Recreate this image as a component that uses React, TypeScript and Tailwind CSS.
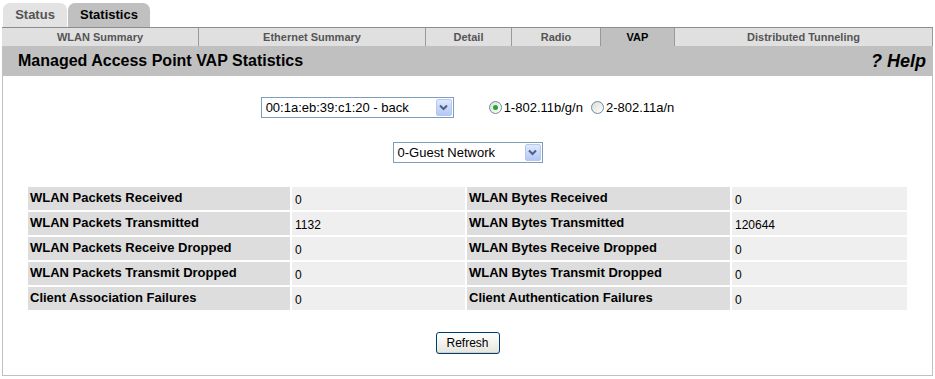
const subTabs = [
  { label: "WLAN Summary", w: "w-[197px]" },
  { label: "Ethernet Summary", w: "w-[227px]" },
  { label: "Detail", w: "w-[86px]" },
  { label: "Radio", w: "w-[89px]" },
  { label: "VAP", w: "w-[74px]", active: true },
  { label: "Distributed Tunneling", w: "flex-1" },
];

const stats = [
  ["WLAN Packets Received", "0", "WLAN Bytes Received", "0"],
  ["WLAN Packets Transmitted", "1132", "WLAN Bytes Transmitted", "120644"],
  ["WLAN Packets Receive Dropped", "0", "WLAN Bytes Receive Dropped", "0"],
  ["WLAN Packets Transmit Dropped", "0", "WLAN Bytes Transmit Dropped", "0"],
  ["Client Association Failures", "0", "Client Authentication Failures", "0"],
];

const DropButton = () => (
  <div className="w-[16px] h-[17px] mr-[1px] rounded-[2px] border border-[#b6c8f0] bg-gradient-to-b from-[#dfe8fd] to-[#b4c8f6] flex items-center justify-center">
    <svg width="9" height="7" viewBox="0 0 9 7">
      <path d="M1 1.5 L4.5 5 L8 1.5" fill="none" stroke="#4d6185" strokeWidth="2" />
    </svg>
  </div>
);

const FakeSelect = ({ value, width }: { value: string; width: string }) => (
  <div className={`${width} h-[21px] border border-[#7f9db9] bg-white flex items-center justify-between`}>
    <span className="pl-[4px] text-[13px] text-black leading-none">{value}</span>
    <DropButton />
  </div>
);

const Radio = ({ checked, label }: { checked?: boolean; label: string }) => (
  <label className="flex items-center gap-[2px] text-[13px] text-black">
    <span className="w-[13px] h-[13px] rounded-full border border-[#6e8aa6] bg-gradient-to-br from-[#dcdcd6] to-white flex items-center justify-center">
      {checked && <span className="w-[5px] h-[5px] rounded-full bg-[#28a428]" />}
    </span>
    {label}
  </label>
);

export default function App() {
  return (
    <div className="w-[935px] h-[379px] bg-white font-['Liberation_Sans',Arial,sans-serif] overflow-hidden">
      {/* main tabs */}
      <div className="h-[27px] flex items-end pl-[3px] gap-[1px]">
        <div className="w-[64px] h-[24px] rounded-t-[7px] bg-[#e3e3e3] flex items-center justify-center text-[13px] font-bold text-[#555]">
          Status
        </div>
        <div className="w-[82px] h-[24px] rounded-t-[7px] bg-[#c0c0c0] flex items-center justify-center text-[13px] font-bold text-black">
          Statistics
        </div>
      </div>

      {/* sub tabs */}
      <div className="mx-[2px] h-[19px] flex border-t border-[#8c8c8c] bg-[#e0e0e0]">
        {subTabs.map((t) => (
          <div
            key={t.label}
            className={`${t.w} border-r border-[#999] flex items-center justify-center text-[11px] font-bold ${
              t.active ? "bg-[#c0c0c0] text-black" : "text-[#555]"
            }`}
          >
            {t.label}
          </div>
        ))}
      </div>

      {/* header */}
      <div className="mx-[2px] h-[30px] bg-[#c0c0c0] flex items-center justify-between pl-[16px] pr-[7px]">
        <h1 className="text-[16px] font-bold text-black">Managed Access Point VAP Statistics</h1>
        <span className="text-[18px] font-bold italic text-black">? Help</span>
      </div>

      {/* content */}
      <div className="mx-[2px] h-[300px] border-x border-b border-[#c0c0c0] pt-[21px]">
        <div className="flex items-center justify-center gap-[35px]">
          <FakeSelect value="00:1a:eb:39:c1:20 - back" width="w-[193px]" />
          <div className="flex items-center gap-[8px]">
            <Radio checked label="1-802.11b/g/n" />
            <Radio label="2-802.11a/n" />
          </div>
        </div>

        <div className="flex justify-center mt-[24px]">
          <FakeSelect value="0-Guest Network" width="w-[150px]" />
        </div>

        <div className="mx-[25px] mt-[24px] grid grid-cols-[262px_173px_263px_175px] auto-rows-[23px] gap-[2px]">
          {stats.map((r) => (
            <div key={r[0]} className="contents">
              <div className="bg-[#dddddd] pl-[2px] pt-[1px] text-[13px] font-bold text-black">{r[0]}</div>
              <div className="bg-[#efefef] pl-[3px] pt-[4px] text-[12px] text-black">{r[1]}</div>
              <div className="bg-[#dddddd] pl-[2px] pt-[1px] text-[13px] font-bold text-black">{r[2]}</div>
              <div className="bg-[#efefef] pl-[3px] pt-[4px] text-[12px] text-black">{r[3]}</div>
            </div>
          ))}
        </div>

        <div className="flex justify-center mt-[22px]">
          <button className="w-[64px] h-[22px] rounded-[3px] border border-[#003c74] bg-gradient-to-b from-white to-[#e6e6de] text-[12px] text-black shadow-[inset_0_-1px_0_#d6d0c5]">
            Refresh
          </button>
        </div>
      </div>
    </div>
  );
}
